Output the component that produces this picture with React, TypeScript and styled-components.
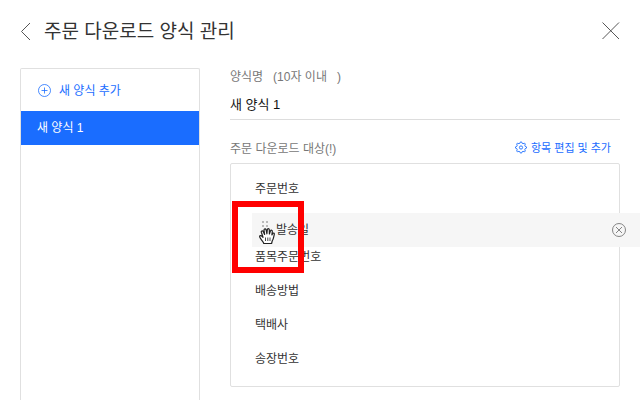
import React, { useState } from "react";
import styled, { createGlobalStyle } from "styled-components";

const GlobalStyle = createGlobalStyle`
  *, *::before, *::after { box-sizing: border-box; }
  body {
    margin: 0;
    overflow: hidden;
    background: #fff;
    color: #333;
    font: 12px/18px "Liberation Sans", "Noto Sans CJK KR", sans-serif;
  }
  button, input { font: inherit; color: inherit; }
`;

const Page = styled.div`
  display: flex;
  flex-direction: column;
  height: 100vh;
  padding: 0 20px;
`;

const Header = styled.header`
  display: flex;
  flex: none;
  align-items: center;
  height: 62px;
`;

const IconButton = styled.button`
  display: flex;
  padding: 0;
  border: 0;
  background: none;
  cursor: pointer;
`;

const Title = styled.h1`
  flex: 1;
  margin: 0 0 0 12px;
  padding-top: 2px;
  color: #333;
  font-size: 19px;
  font-weight: 400;
  line-height: 28px;
`;

const Content = styled.div`
  display: flex;
  flex: 1;
  gap: 30px;
  min-height: 0;
  padding-top: 6px;
`;

const Sidebar = styled.nav`
  flex: none;
  width: 180px;
  border: 1px solid #e0e0e0;
  border-bottom: 0;
  border-radius: 2px 2px 0 0;
`;

const AddFormButton = styled.button`
  display: flex;
  align-items: center;
  gap: 7px;
  width: 100%;
  height: 42px;
  padding: 2px 17px 0;
  border: 0;
  background: none;
  color: #1a6dff;
  cursor: pointer;
`;

const FormTab = styled.button<{ $selected: boolean }>`
  display: block;
  width: 100%;
  height: 34px;
  padding: 0 16px;
  border: 0;
  background: ${({ $selected }) => ($selected ? "#1a6dff" : "#fff")};
  color: ${({ $selected }) => ($selected ? "#fff" : "#333")};
  text-align: left;
  cursor: pointer;
`;

const Editor = styled.main`
  flex: 1;
  min-width: 0;
`;

const NameLabel = styled.label`
  display: block;
  color: #777;
  line-height: 18px;
  white-space: pre;
`;

const NameInput = styled.input`
  display: block;
  width: 100%;
  height: 34px;
  padding: 2px 0 0;
  border: 0;
  border-bottom: 1px solid #ddd;
  outline: 0;
  background: none;
  color: #111;
  font-size: 13px;
`;

const TargetBar = styled.div`
  display: flex;
  align-items: center;
  justify-content: space-between;
  height: 43px;
  padding: 12px 9px 0 0;
`;

const TargetTitle = styled.h2`
  margin: 0;
  padding-top: 2px;
  color: #777;
  font-size: 12px;
  font-weight: 400;
`;

const EditButton = styled.button`
  display: flex;
  align-items: center;
  gap: 4px;
  padding: 0;
  border: 0;
  background: none;
  color: #1a6dff;
  font-size: 11px;
  cursor: pointer;
`;

const FieldList = styled.ul`
  margin: 0;
  padding: 8px 0 10px;
  border: 1px solid #e0e0e0;
  border-radius: 2px;
  list-style: none;
`;

const FieldRow = styled.li`
  position: relative;
  display: flex;
  align-items: center;
  height: 34px;
  padding: 0 24px;
`;

const DraggedField = styled.div`
  position: absolute;
  top: 7px;
  right: -24px;
  left: 21px;
  z-index: 1;
  display: flex;
  align-items: center;
  height: 34px;
  padding: 0 17px 0 7px;
  background: #f6f6f6;
`;

const DraggedName = styled.span`
  flex: 1;
`;

const Highlight = styled.div`
  position: absolute;
  top: -5px;
  left: 1px;
  z-index: 2;
  width: 72px;
  height: 72px;
  border: 6px solid #f00;
  pointer-events: none;
`;

const BackIcon = () => (
  <svg width="12" height="20" viewBox="0 0 12 20" fill="none" stroke="#555">
    <path d="M10 2 1.5 10.5 10 19" />
  </svg>
);

const CloseIcon = () => (
  <svg width="18" height="18" viewBox="0 0 18 18" fill="none" stroke="#444" strokeWidth=".9">
    <path d="M.5.5l16.5 16.5M17 .5L.5 17" />
  </svg>
);

const PlusIcon = () => (
  <svg width="14" height="14" viewBox="0 0 14 14" fill="none" stroke="currentColor" strokeWidth=".8">
    <circle cx="6.5" cy="6.5" r="6" />
    <path d="M6.5 3.500v6M3.500 6.500h6" />
  </svg>
);

const gearOutline = Array.from({ length: 32 }, (_, i) => {
  const angle = ((i - 1.5) * Math.PI) / 16;
  const radius = i % 4 === 1 || i % 4 === 2 ? 5.6 : 4.3;
  return `${6 + radius * Math.sin(angle)},${6.5 - radius * Math.cos(angle)}`;
}).join(" ");

const GearIcon = () => (
  <svg width="12" height="13" viewBox="0 0 12 13" fill="none" stroke="currentColor" strokeWidth=".9">
    <polygon points={gearOutline} strokeLinejoin="round" />
    <circle cx="6" cy="6.5" r="1.6" />
  </svg>
);

const RemoveIcon = () => (
  <svg width="14" height="14" viewBox="0 0 14 14" fill="none" stroke="#777" strokeWidth=".9">
    <circle cx="7" cy="7" r="6.5" />
    <path d="M4 4l6 6M10 4l-6 6" />
  </svg>
);

const GrabHandle = () => (
  <svg width="17" height="34" viewBox="0 0 17 34">
    <path
      d="M3 8h2v2H3zM7 8h2v2H7zM3 12h2v2H3zM7 12h2v2H7z"
      fill="#bbb"
    />
    <g transform="translate(0 15)">
      <path
        d="M4.800 15.500C4.500 14.400 3.600 13.400 2.400 11.800 1.600 10.700.6 9.600.6 8.600.6 7.600 1.800 7.300 2.700 8L4 9.300C3.600 7.600 2.900 6 2.300 4.300 1.900 3 3.400 2.200 4.200 3.400L5.600 6.400 5 2.200C4.900.7 6.700.3 7.100 1.800L7.900 5.800 8.300 1.700C8.500.3 10.200.4 10.300 1.800L10.400 6 11.500 2.900C12 1.600 13.600 2.200 13.300 3.600L12.900 6.900 13.600 5.600C14.300 4.500 15.600 5.100 15.300 6.400 14.800 8.400 14.600 10.800 13.200 13L12.600 15.500Z"
        fill="#fff"
        stroke="#222"
        strokeWidth="1.2"
        strokeLinejoin="round"
      />
      <path d="M6.500 9.500v3.500M8.800 9.500v3.500M11 9.500v3.500" fill="none" stroke="#333" strokeWidth=".9" />
    </g>
  </svg>
);

const fields = ["주문번호", "발송일", "품목주문번호", "배송방법", "택배사", "송장번호"];
const draggedField = "발송일";

export default function App() {
  const [name, setName] = useState("새 양식 1");

  return (
    <>
      <GlobalStyle />
      <Page>
        <Header>
          <IconButton type="button" aria-label="뒤로">
            <BackIcon />
          </IconButton>
          <Title>주문 다운로드 양식 관리</Title>
          <IconButton type="button" aria-label="닫기">
            <CloseIcon />
          </IconButton>
        </Header>
        <Content>
          <Sidebar>
            <AddFormButton type="button">
              <PlusIcon />새 양식 추가
            </AddFormButton>
            <FormTab type="button" $selected>
              {name}
            </FormTab>
          </Sidebar>
          <Editor>
            <NameLabel htmlFor="form-name">{"양식명   (10자 이내   )"}</NameLabel>
            <NameInput
              id="form-name"
              value={name}
              onChange={(event) => setName(event.target.value)}
            />
            <TargetBar>
              <TargetTitle>주문 다운로드 대상(!)</TargetTitle>
              <EditButton type="button">
                <GearIcon />
                항목 편집 및 추가
              </EditButton>
            </TargetBar>
            <FieldList>
              {fields.map((field) => (
                <FieldRow key={field}>
                  {field === draggedField ? (
                    <>
                      <DraggedField>
                        <GrabHandle />
                        <DraggedName>{field}</DraggedName>
                        <IconButton type="button" aria-label={`${field} 삭제`}>
                          <RemoveIcon />
                        </IconButton>
                      </DraggedField>
                      <Highlight />
                    </>
                  ) : (
                    field
                  )}
                </FieldRow>
              ))}
            </FieldList>
          </Editor>
        </Content>
      </Page>
    </>
  );
}
